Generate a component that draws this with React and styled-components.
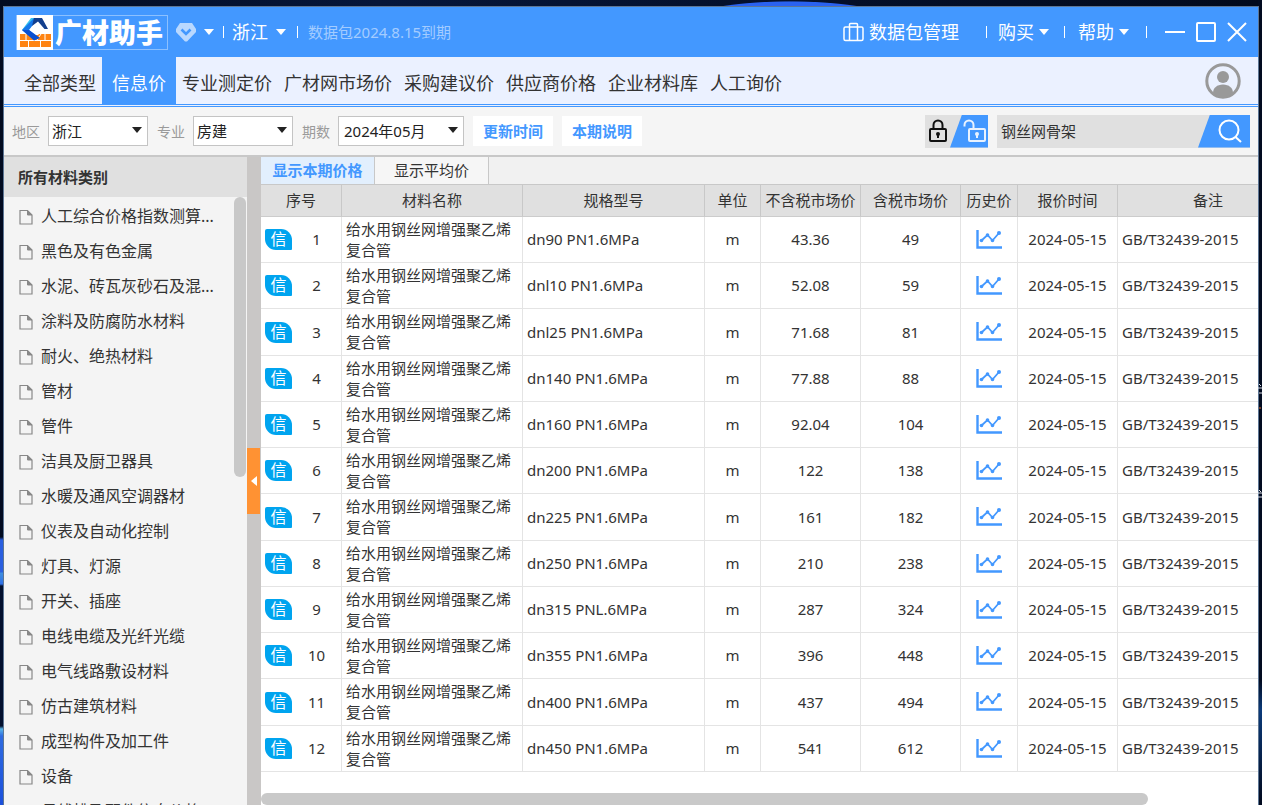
import React, { useState } from 'react';
import styled, { createGlobalStyle } from 'styled-components';

const GlobalStyle = createGlobalStyle`
  * {
    box-sizing: border-box;
  }

  body {
    margin: 0;
    overflow: hidden;
    font-family: "Noto Sans", "Noto Sans CJK SC", sans-serif;
    font-size: 15px;
    line-height: 21px;
    color: #333333;
  }

  button,
  input,
  select {
    font: inherit;
    color: inherit;
    border: none;
    padding: 0;
    background: none;
  }

  svg {
    display: block;
    flex: none;
  }
`;

/* Desktop behind the window */

const Desktop = styled.div`
  position: relative;
  height: 100vh;
  padding: 7px 4px 0;
  background:
    radial-gradient(ellipse 110px 22px at 790px 23px, #2a62f0 96%, transparent 100%),
    linear-gradient(#020b20, #020b20 537px, #2a5fe0 540px, #2a5fe0 572px, #3f8fe0 573px,
      #2f6fe6 584px, #03102e 586px, #03102e 726px, #58b4e8 729px, #2f6be0 736px, #1b50dc) 0 0 / 4px 100% no-repeat,
    linear-gradient(#020b20 680px, #0b3a7a 710px, #020b20 800px) 100% 0 / 4px 100% no-repeat,
    linear-gradient(90deg, #020b20, #06163a 30%, #04102c 60%, #020a1c);
`;

const DesktopMarks = styled.svg`
  position: absolute;
  right: 0;
  top: 380px;
`;

const Window = styled.div`
  display: flex;
  flex-direction: column;
  height: 100%;
  background: #f5f5f5;
  box-shadow: 0 0 0 1px #5d7694;
`;

/* Title bar */

const TitleBar = styled.header`
  flex: none;
  display: flex;
  align-items: center;
  height: 50px;
  padding: 0 11px 0 12px;
  background: #4398ff;
  color: #ffffff;
  font-size: 18px;
`;

const Logo = styled.div`
  display: flex;
  align-items: center;
  height: 35px;
  padding-right: 4px;
  border: 1px solid #8cc0ff;
  font-size: 27px;
  font-weight: 900;
  line-height: 33px;

  svg {
    margin-right: 2px;
  }
`;

const TitleButton = styled.button`
  display: flex;
  align-items: center;
  gap: ${(props) => props.$gap || 5}px;
  height: 30px;
  margin-left: ${(props) => props.$left || 0}px;
  white-space: nowrap;
`;

const Divider = styled.span`
  flex: none;
  width: 1px;
  height: 12px;
  margin: 0 ${(props) => props.$right}px 0 ${(props) => props.$left}px;
  background: #ffffff;
`;

const Expiry = styled.span`
  font-size: 15px;
  color: #a3ccff;
  white-space: nowrap;
`;

const TitleSpacer = styled.div`
  flex: 1;
`;

/* Main navigation */

const Nav = styled.nav`
  flex: none;
  display: flex;
  align-items: stretch;
  height: 50px;
  padding: 0 17px 0 11px;
  border-bottom: 3px double #4398ff;
  background: #ebf1ff;
`;

const NavLink = styled.a`
  display: flex;
  align-items: center;
  padding: 6px ${(props) => (props.$active ? 10 : 6)}px 0;
  font-size: 18px;
  white-space: nowrap;
  text-decoration: none;
  color: ${(props) => (props.$active ? '#ffffff' : '#333333')};
  background: ${(props) => (props.$active ? '#4398ff' : 'transparent')};

  &:first-child {
    padding-left: 9px;
  }
`;

const Account = styled.button`
  align-self: center;
  margin-left: auto;
`;

/* Filter bar */

const FilterBar = styled.div`
  flex: none;
  display: flex;
  align-items: center;
  gap: 9px;
  height: 50px;
  padding: 0 8px;
  border-bottom: 2px solid #c8c8c8;
  background: #f5f5f5;
`;

const Field = styled.label`
  display: flex;
  align-items: center;
  gap: 8px;
  font-size: 14px;
  color: #9a9a9a;
  white-space: nowrap;
`;

const SelectBox = styled.span`
  position: relative;
  width: ${(props) => props.$width}px;

  svg {
    position: absolute;
    right: 6px;
    top: 10px;
    pointer-events: none;
  }
`;

const Select = styled.select`
  display: block;
  width: 100%;
  height: 30px;
  padding: 0 ${(props) => props.$inset}px;
  appearance: none;
  border: 1px solid #c4c4c4;
  background: #ffffff;
  font-size: 15px;
  color: #222222;
`;

const FilterButton = styled.button`
  height: 30px;
  padding: 0 10px;
  background: #ffffff;
  color: #4398ff;
  font-weight: 600;
  white-space: nowrap;
`;

const LockSwitch = styled.div`
  display: flex;
  height: 33px;
  margin-left: auto;
  background: #e0e0e0;
`;

const LockButton = styled.button`
  display: flex;
  align-items: center;
  justify-content: center;
  width: 25px;
`;

const UnlockButton = styled(LockButton)`
  width: 38px;
  padding-left: 12px;
  background: #4398ff;
  clip-path: polygon(12px 0, 100% 0, 100% 100%, 0 100%);
`;

const SearchBox = styled.form`
  display: flex;
  width: 253px;
  height: 33px;
  background: #e0e0e0;
`;

const SearchInput = styled.input`
  flex: 1;
  min-width: 0;
  padding: 0 4px;
  outline: none;
`;

const SearchButton = styled.button`
  display: flex;
  align-items: center;
  justify-content: center;
  width: 52px;
  padding-left: 12px;
  background: #4398ff;
  clip-path: polygon(12px 0, 100% 0, 100% 100%, 0 100%);
`;

/* Body */

const Body = styled.div`
  flex: 1;
  display: flex;
  min-height: 0;
`;

const Sidebar = styled.aside`
  flex: none;
  display: flex;
  flex-direction: column;
  width: 243px;
  background: #f4f4f4;
`;

const SidebarTitle = styled.h2`
  flex: none;
  margin: 0;
  padding: 0 14px;
  font-size: 15px;
  line-height: 40px;
  font-weight: 700;
  background: #e0e0e0;
`;

const SidebarScroll = styled.div`
  flex: 1;
  display: flex;
  justify-content: space-between;
  min-height: 0;
  overflow: hidden;
`;

const CategoryList = styled.ul`
  margin: 0;
  padding: 2px 0 0 15px;
  list-style: none;
`;

const Category = styled.li`
  a {
    display: flex;
    align-items: center;
    gap: 8px;
    height: 35px;
    font-size: 16px;
    white-space: nowrap;
    text-decoration: none;
    color: #333333;
  }
`;

const VerticalThumb = styled.div`
  width: 12px;
  height: 280px;
  margin-right: 1px;
  border-radius: 6px;
  background: #c8c8c8;
`;

const Splitter = styled.div`
  flex: none;
  display: flex;
  align-items: center;
  width: 14px;
  background: #c9c7c6;
`;

const CollapseButton = styled.button`
  display: flex;
  align-items: center;
  justify-content: center;
  width: 13px;
  height: 66px;
  background: #ff9233;
`;

/* Price pane */

const Pane = styled.main`
  flex: 1;
  display: flex;
  flex-direction: column;
  min-width: 0;
  background: #ffffff;
`;

const ViewTabs = styled.div`
  flex: none;
  display: flex;
  height: 28px;
  background: #f1f1f1;
  border-bottom: 1px solid #c8c8c8;
`;

const ViewTab = styled.button`
  width: 114px;
  border-right: 1px solid #c8c8c8;
  background: ${(props) => (props.$active ? '#e2effd' : '#f6f6f6')};
  color: ${(props) => (props.$active ? '#4398ff' : '#333333')};
  font-weight: ${(props) => (props.$active ? 600 : 400)};
`;

const TableScroll = styled.div`
  flex: 1;
  min-height: 0;
  overflow: hidden;
`;

const PriceTable = styled.table`
  width: 1038px;
  table-layout: fixed;
  border-collapse: separate;
  border-spacing: 0;
`;

const HeadCell = styled.th`
  width: ${(props) => props.$width}px;
  height: 32px;
  padding: 0;
  border-right: 1px solid #c8c8c8;
  border-bottom: 1px solid #cccccc;
  background: #e0e0e0;
  font-weight: 400;
  white-space: nowrap;
`;

const Row = styled.tr`
  height: 46px;

  &:nth-child(4n + 3) {
    height: 47px;
  }
`;

const Cell = styled.td`
  padding: 0 4px;
  border-right: 1px solid #e4e4e4;
  border-bottom: 1px solid #e4e4e4;
  text-align: ${(props) => props.$align || 'center'};
`;

const IndexCell = styled.div`
  display: flex;
  align-items: center;

  span {
    flex: 1;
    padding-left: 4px;
    text-align: center;
  }
`;

const InfoBadge = styled.b`
  flex: none;
  width: 27px;
  height: 21px;
  border-radius: 2px 11px 1px 11px;
  background: #00a4ef;
  color: #ffffff;
  font-size: 16px;
  font-weight: 400;
  text-align: center;
`;

const TrendButton = styled.button`
  display: inline-block;
  padding-bottom: 2px;
  vertical-align: middle;
`;

const HorizontalThumb = styled.div`
  flex: none;
  width: 89%;
  height: 12px;
  border-radius: 6px;
  background: #c9c9c9;
`;

const categories = [
  '人工综合价格指数测算...',
  '黑色及有色金属',
  '水泥、砖瓦灰砂石及混...',
  '涂料及防腐防水材料',
  '耐火、绝热材料',
  '管材',
  '管件',
  '洁具及厨卫器具',
  '水暖及通风空调器材',
  '仪表及自动化控制',
  '灯具、灯源',
  '开关、插座',
  '电线电缆及光纤光缆',
  '电气线路敷设材料',
  '仿古建筑材料',
  '成型构件及加工件',
  '设备',
  '母线槽及配件信息价格',
];

const navItems = [
  '全部类型',
  '信息价',
  '专业测定价',
  '广材网市场价',
  '采购建议价',
  '供应商价格',
  '企业材料库',
  '人工询价',
];

const columns = [
  ['序号', 81],
  ['材料名称', 181],
  ['规格型号', 182],
  ['单位', 56],
  ['不含税市场价', 100],
  ['含税市场价', 100],
  ['历史价', 57],
  ['报价时间', 100],
  ['备注', 181],
];

const prices = [
  ['dn90 PN1.6MPa', '43.36', '49'],
  ['dnl10 PN1.6MPa', '52.08', '59'],
  ['dnl25 PN1.6MPa', '71.68', '81'],
  ['dn140 PN1.6MPa', '77.88', '88'],
  ['dn160 PN1.6MPa', '92.04', '104'],
  ['dn200 PN1.6MPa', '122', '138'],
  ['dn225 PN1.6MPa', '161', '182'],
  ['dn250 PN1.6MPa', '210', '238'],
  ['dn315 PNL.6MPa', '287', '324'],
  ['dn355 PN1.6MPa', '396', '448'],
  ['dn400 PN1.6MPa', '437', '494'],
  ['dn450 PN1.6MPa', '541', '612'],
];

const Caret = ({ color = '#ffffff', width = 10 }) => (
  <svg width={width} height="8" viewBox="0 0 10 8" aria-hidden="true">
    <path d="M0 1h10L5 7z" fill={color} />
  </svg>
);

const LogoMark = () => (
  <svg width="36" height="35" viewBox="0 0 36 35" aria-hidden="true">
    <rect width="36" height="35" fill="#ffffff" />
    <path d="M3 19h31v6H3zM3 26h8v6H3zM12 26h11v6H12zM24 26h10v6H24z" fill="#ff8412" />
    <path d="M9 19v6M24 19l-4 6M28 19v6" stroke="#ffffff" strokeWidth="1" />
    <path d="M14 3h10l5 10-8 7h-4l-7-6z" fill="#ffffff" />
    <path d="M5 15l9-12h7L11 15z" fill="#35c3f0" />
    <path d="M5 15l12-12h4l-9 12 10 8-5 2z" fill="#1778ea" />
    <path d="M5 15l7 0 11 8-6 2.500z" fill="#0b50d0" />
    <path d="M17 3h8l6 11h-3.500L21 6.500l-6 4.500z" fill="#123f8e" />
  </svg>
);

const Gem = () => (
  <svg width="20" height="20" viewBox="0 0 20 20" aria-hidden="true">
    <path d="M4 1h12l4 6v3l-9 9.500h-2L0 10V7z" fill="#b9d8ff" />
    <path d="M5.500 7.500l4.500 4.500 4.500-4.500" fill="none" stroke="#4398ff" strokeWidth="2.600" />
  </svg>
);

const Suitcase = () => (
  <svg width="21" height="20" viewBox="0 0 21 20" fill="none" stroke="#ffffff" strokeWidth="1.500" aria-hidden="true">
    <rect x="1" y="5" width="19" height="13.500" rx="1.500" />
    <path d="M6.500 18.500V2.500a1 1 0 0 1 1-1h6a1 1 0 0 1 1 1v16" />
  </svg>
);

const Avatar = () => (
  <svg width="36" height="36" viewBox="0 0 36 36" aria-hidden="true">
    <circle cx="18" cy="18" r="16.200" fill="#ebf1ff" stroke="#999999" strokeWidth="3" />
    <circle cx="18" cy="14" r="6" fill="#999999" />
    <path d="M8 30c0-5 4-8.500 10-8.500S28 25 28 30c-3 3-6 4.500-10 4.500S11 33 8 30z" fill="#999999" />
  </svg>
);

const Lock = () => (
  <svg width="18" height="24" viewBox="0 0 18 24" fill="none" stroke="#111111" aria-hidden="true">
    <rect x="1" y="10" width="16" height="12" rx="1" strokeWidth="2" />
    <path d="M4.500 10V6a4.500 4.500 0 0 1 9 0v4" strokeWidth="2" />
    <circle cx="9" cy="15" r="2" fill="#111111" stroke="none" />
    <path d="M9 15v4" strokeWidth="2" />
  </svg>
);

const Unlock = () => (
  <svg width="24" height="24" viewBox="0 0 24 24" fill="none" stroke="#e8f2ff" aria-hidden="true">
    <rect x="6" y="10" width="16" height="12" rx="1" strokeWidth="2" />
    <path d="M1.500 7.500V6a4.500 4.500 0 0 1 9 0v4" strokeWidth="2" />
    <circle cx="14" cy="15" r="2" fill="#e8f2ff" stroke="none" />
    <path d="M14 15v4" strokeWidth="2" />
  </svg>
);

const Magnifier = () => (
  <svg width="24" height="24" viewBox="0 0 24 24" fill="none" stroke="#ffffff" strokeWidth="2" aria-hidden="true">
    <circle cx="11" cy="11" r="9.500" />
    <path d="M17.500 18l5.500 5" />
  </svg>
);

const Page = () => (
  <svg width="14" height="16" viewBox="0 0 14 16" fill="none" stroke="#888888" aria-hidden="true">
    <path d="M1 1.500h7.500l4.500 4.500v9H1z" strokeWidth="1.200" />
    <path d="M8.500 1.500V6H13z" fill="#888888" />
  </svg>
);

const Trend = () => (
  <svg width="26" height="19" viewBox="0 0 26 19" fill="none" stroke="#4398ff" aria-hidden="true">
    <path d="M1.500 0v17.500H26" strokeWidth="2.400" />
    <path d="M5.500 10.500l6-5.500 5 5.500 6.500-7.500" strokeWidth="1.800" />
    <g fill="#4398ff" stroke="none">
      <circle cx="5.500" cy="10.500" r="1.800" />
      <circle cx="11.500" cy="5" r="1.800" />
      <circle cx="16.500" cy="10.500" r="1.800" />
      <circle cx="23" cy="3" r="2" />
    </g>
  </svg>
);

const FilterSelect = ({ label, width, inset = 3, options }) => (
  <Field>
    {label}
    <SelectBox $width={width}>
      <Select $inset={inset} defaultValue={options[0]}>
        {options.map((option) => (
          <option key={option}>{option}</option>
        ))}
      </Select>
      <Caret color="#222222" />
    </SelectBox>
  </Field>
);

const App = () => {
  const [keyword, setKeyword] = useState('钢丝网骨架');

  return (
    <Desktop>
      <GlobalStyle />
      <DesktopMarks width="4" height="122" viewBox="0 0 4 122" aria-hidden="true">
        <path d="M1 4l2 2M0 8h4M1 13h3M1 110l2 2M0 113h4M0 117h4" stroke="#d8dce4" />
        <path d="M1 28h2" stroke="#e07030" />
      </DesktopMarks>
      <Window>
        <TitleBar>
          <Logo>
            <LogoMark />
            广材助手
          </Logo>
          <TitleButton $left={8} $gap={8} aria-label="会员">
            <Gem />
            <Caret />
          </TitleButton>
          <Divider $left={9} $right={8} />
          <TitleButton $gap={8}>
            浙江
            <Caret />
          </TitleButton>
          <Divider $left={11} $right={10} />
          <Expiry>数据包2024.8.15到期</Expiry>
          <TitleSpacer />
          <TitleButton>
            <Suitcase />
            数据包管理
          </TitleButton>
          <Divider $left={27} $right={11} />
          <TitleButton>
            购买
            <Caret />
          </TitleButton>
          <Divider $left={15} $right={13} />
          <TitleButton>
            帮助
            <Caret />
          </TitleButton>
          <Divider $left={17} $right={18} />
          <TitleButton aria-label="最小化">
            <svg width="20" height="20" viewBox="0 0 20 20">
              <path d="M0 10h20" stroke="#ffffff" strokeWidth="2" />
            </svg>
          </TitleButton>
          <TitleButton $left={11} aria-label="最大化">
            <svg width="20" height="20" viewBox="0 0 20 20">
              <rect x="1" y="1" width="18" height="18" rx="1" fill="none" stroke="#ffffff" strokeWidth="2" />
            </svg>
          </TitleButton>
          <TitleButton $left={11} aria-label="关闭">
            <svg width="20" height="20" viewBox="0 0 20 20">
              <path d="M1 1l18 18M19 1L1 19" stroke="#ffffff" strokeWidth="2" />
            </svg>
          </TitleButton>
        </TitleBar>

        <Nav>
          {navItems.map((item) => (
            <NavLink key={item} href="#" $active={item === '信息价'}>
              {item}
            </NavLink>
          ))}
          <Account aria-label="账号">
            <Avatar />
          </Account>
        </Nav>

        <FilterBar>
          <FilterSelect label="地区" width={100} options={['浙江']} />
          <FilterSelect label="专业" width={100} options={['房建']} />
          <FilterSelect label="期数" width={126} inset={5} options={['2024年05月']} />
          <FilterButton>更新时间</FilterButton>
          <FilterButton>本期说明</FilterButton>
          <LockSwitch>
            <LockButton aria-label="锁定">
              <Lock />
            </LockButton>
            <UnlockButton aria-label="解锁">
              <Unlock />
            </UnlockButton>
          </LockSwitch>
          <SearchBox onSubmit={(event) => event.preventDefault()}>
            <SearchInput
              aria-label="搜索材料"
              value={keyword}
              onChange={(event) => setKeyword(event.target.value)}
            />
            <SearchButton aria-label="搜索">
              <Magnifier />
            </SearchButton>
          </SearchBox>
        </FilterBar>

        <Body>
          <Sidebar>
            <SidebarTitle>所有材料类别</SidebarTitle>
            <SidebarScroll>
              <CategoryList>
                {categories.map((category) => (
                  <Category key={category}>
                    <a href="#">
                      <Page />
                      {category}
                    </a>
                  </Category>
                ))}
              </CategoryList>
              <VerticalThumb />
            </SidebarScroll>
          </Sidebar>
          <Splitter>
            <CollapseButton aria-label="收起">
              <svg width="6" height="12" viewBox="0 0 6 12">
                <path d="M6 1v10L0 6z" fill="#ffffff" />
              </svg>
            </CollapseButton>
          </Splitter>
          <Pane>
            <ViewTabs>
              <ViewTab $active>显示本期价格</ViewTab>
              <ViewTab>显示平均价</ViewTab>
            </ViewTabs>
            <TableScroll>
              <PriceTable>
                <thead>
                  <tr>
                    {columns.map(([title, width]) => (
                      <HeadCell key={title} $width={width}>
                        {title}
                      </HeadCell>
                    ))}
                  </tr>
                </thead>
                <tbody>
                  {prices.map(([spec, net, gross], index) => (
                    <Row key={spec}>
                      <Cell>
                        <IndexCell>
                          <InfoBadge>信</InfoBadge>
                          <span>{index + 1}</span>
                        </IndexCell>
                      </Cell>
                      <Cell $align="left">给水用钢丝网增强聚乙烯复合管</Cell>
                      <Cell $align="left">{spec}</Cell>
                      <Cell>m</Cell>
                      <Cell>{net}</Cell>
                      <Cell>{gross}</Cell>
                      <Cell>
                        <TrendButton aria-label="历史价">
                          <Trend />
                        </TrendButton>
                      </Cell>
                      <Cell>2024-05-15</Cell>
                      <Cell $align="left">GB/T32439-2015</Cell>
                    </Row>
                  ))}
                </tbody>
              </PriceTable>
            </TableScroll>
            <HorizontalThumb />
          </Pane>
        </Body>
      </Window>
    </Desktop>
  );
};

export default App;
